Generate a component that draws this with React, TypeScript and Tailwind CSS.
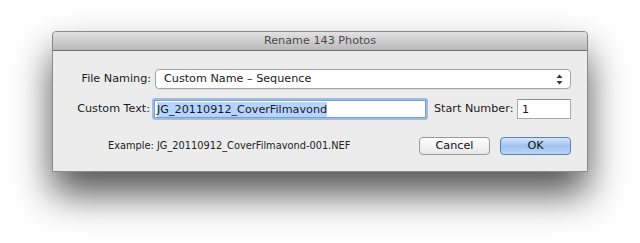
import { useState } from 'react';

const font = { fontFamily: '"Lucida Grande", "DejaVu Sans", "Liberation Sans", sans-serif' };

function Updown() {
  return (
    <svg width="7" height="11" viewBox="0 0 7 11" className="text-[#333]">
      <path d="M3.5 0.5 L6.5 4 L0.5 4 Z" fill="currentColor" />
      <path d="M3.5 10.5 L6.5 7 L0.5 7 Z" fill="currentColor" />
    </svg>
  );
}

export default function App() {
  const [start, setStart] = useState('1');

  return (
    <div className="w-[640px] h-[243px] bg-white overflow-hidden pt-[31px] pl-[52px]" style={font}>
      <div className="w-[536px] h-[141px] bg-[#ececec] border border-[#8a8a8a] rounded-t-[4px] shadow-[0_22px_38px_rgba(0,0,0,0.68)] flex flex-col">
        {/* title bar */}
        <div className="h-[19px] shrink-0 bg-gradient-to-b from-[#e2e2e2] to-[#b9b9b9] border-b border-[#6e6e6e] rounded-t-[4px] flex items-center justify-center text-[11.2px] text-[#4b4b4b] leading-none">
          Rename 143 Photos
        </div>

        <div className="flex-1 pr-[16px] text-[11.2px] text-[#1a1a1a] whitespace-nowrap">
          {/* File Naming */}
          <div className="flex items-center mt-[18px] h-[20px]">
            <span className="w-[98px] shrink-0 text-right">File Naming:</span>
            <div className="ml-[4px] flex-1 h-[20px] bg-white border border-[#a4a4a4] rounded-[4px] shadow-[0_1px_0_rgba(0,0,0,0.05)] flex items-center justify-between pl-[8px] pr-[7px]">
              <span>Custom Name – Sequence</span>
              <Updown />
            </div>
          </div>

          {/* Custom Text + Start Number */}
          <div className="flex items-center mt-[9px] h-[22px]">
            <span className="w-[97px] shrink-0 text-right">Custom Text:</span>
            <div className="ml-[2px] w-[276px] shrink-0 h-[22px] rounded-[3px] bg-[#9dbde8] p-[2px]">
              <div className="h-full bg-white border border-[#7f9cc5] flex items-center pl-[2px]">
                <span className="bg-[#b5d5ff] leading-[15px]">JG_20110912_CoverFilmavond</span>
              </div>
            </div>
            <span className="ml-[6px] shrink-0">Start Number:</span>
            <input
              value={start}
              onChange={(e) => setStart(e.target.value)}
              className="ml-auto w-[54px] h-[20px] bg-white border border-[#a9a9a9] border-t-[#8e8e8e] px-[4px] text-[11.2px] outline-none"
              style={font}
            />
          </div>

          {/* example + buttons */}
          <div className="flex items-center mt-[17px] h-[18px]">
            <span className="ml-[55px] text-[9.8px] text-[#222]">Example: JG_20110912_CoverFilmavond-001.NEF</span>
            <div className="ml-auto flex gap-[10px]">
              <button className="w-[71px] h-[18px] rounded-[4px] border border-[#9a9a9a] bg-gradient-to-b from-white to-[#e8e8e8] text-[11.2px] leading-none text-[#111]">
                Cancel
              </button>
              <button className="w-[71px] h-[18px] rounded-[4px] border border-[#5a7fb5] bg-gradient-to-b from-[#d5e6fa] via-[#9ec3ef] to-[#b9d6f7] text-[11.2px] leading-none text-[#111]">
                OK
              </button>
            </div>
          </div>
        </div>
      </div>
    </div>
  );
}
